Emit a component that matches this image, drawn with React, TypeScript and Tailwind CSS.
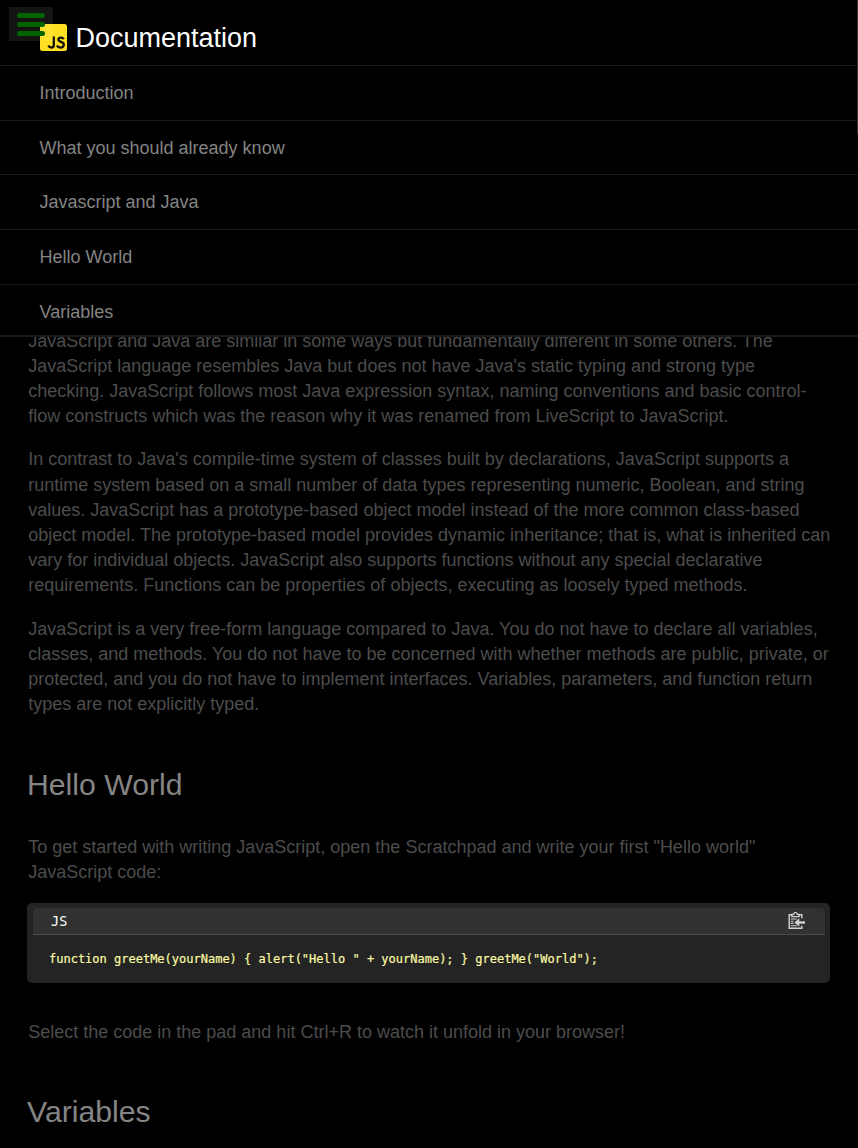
const links = [
  "Introduction",
  "What you should already know",
  "Javascript and Java",
  "Hello World",
  "Variables",
];

const paragraphs = [
  [
    "JavaScript and Java are similar in some ways but fundamentally different in some others. The",
    "JavaScript language resembles Java but does not have Java's static typing and strong type",
    "checking. JavaScript follows most Java expression syntax, naming conventions and basic control-",
    "flow constructs which was the reason why it was renamed from LiveScript to JavaScript.",
  ],
  [
    "In contrast to Java's compile-time system of classes built by declarations, JavaScript supports a",
    "runtime system based on a small number of data types representing numeric, Boolean, and string",
    "values. JavaScript has a prototype-based object model instead of the more common class-based",
    "object model. The prototype-based model provides dynamic inheritance; that is, what is inherited can",
    "vary for individual objects. JavaScript also supports functions without any special declarative",
    "requirements. Functions can be properties of objects, executing as loosely typed methods.",
  ],
  [
    "JavaScript is a very free-form language compared to Java. You do not have to declare all variables,",
    "classes, and methods. You do not have to be concerned with whether methods are public, private, or",
    "protected, and you do not have to implement interfaces. Variables, parameters, and function return",
    "types are not explicitly typed.",
  ],
];

function Paragraph({ lines }: { lines: string[] }) {
  return (
    <p className="mb-[18px] pl-[1.2px] text-[18px] leading-[25.2px] whitespace-nowrap text-[#4c4c4c]">
      {lines.map((line) => (
        <span key={line} className="block">
          {line}
        </span>
      ))}
    </p>
  );
}

function MenuButton() {
  return (
    <button className="absolute top-[7px] left-[9px] flex h-[34px] w-11 flex-col gap-[4.5px] bg-[#ffffe6]/[0.08] pt-[6.3px] pl-2">
      <span className="h-[4.5px] w-7 rounded-full bg-[#006400]" />
      <span className="h-[4.5px] w-7 rounded-full bg-[#006400]" />
      <span className="h-[4.5px] w-7 rounded-full bg-[#006400]" />
    </button>
  );
}

function JsLogo() {
  return (
    <svg viewBox="0 0 27 27" className="h-[27px] w-[27px]">
      <rect width="27" height="27" rx="2.5" fill="#ffdf22" />
      <g fill="none" stroke="#111" strokeWidth="2.3">
        <path d="M13.8 12.6v8.4c0 1.8-.8 2.6-2.3 2.6-1.5 0-2.5-.7-3.2-1.9" />
        <path d="M23.8 15.2c-.7-1.1-1.6-1.6-2.8-1.6-1.6 0-2.6.8-2.6 2 0 2.9 5.4 1.8 5.4 5 0 1.9-1.3 3-3.3 3-1.7 0-3-.8-3.7-2.1" />
      </g>
    </svg>
  );
}

function CopyIcon() {
  return (
    <svg viewBox="0 0 18 19" className="-mt-px h-[19px] w-[18px]" fill="none" stroke="#d0d3d2">
      <path d="M4 3.7H1.2v13.6h12.6v-2.6M11 3.7h2.8v3.6" strokeWidth="1.4" />
      <path d="M3.9 5.6V3.4h1.8c.3-2.6 3.3-2.6 3.6 0h1.8v2.2z" strokeWidth="1.3" />
      <path d="M2.8 8h6M2.8 10.2h2.7M2.8 12.4h2.7M2.8 14.8h6" strokeWidth="1.1" />
      <path d="M17 11.5H9" strokeWidth="2.4" />
      <path d="M6.3 11.5l5-4.2v8.4z" fill="#d0d3d2" stroke="none" />
    </svg>
  );
}

export default function App() {
  return (
    <div className="flex h-[1148px] w-full flex-col overflow-hidden bg-black font-['Liberation_Sans',Arial,sans-serif]">
      <nav className="relative z-10 h-[337px] shrink-0 overflow-hidden border-b-2 border-[#191919] bg-black">
        <header className="flex h-[65px] items-center gap-[8.5px] pt-[10px] pl-10">
          <JsLogo />
          <h1 className="text-[27px] leading-[30px] text-white">Documentation</h1>
        </header>
        <ul>
          {links.map((link) => (
            <li
              key={link}
              className="flex h-[54.7px] items-center border-t border-[#1b1b1b] pt-px pl-[39.5px] text-[18px] text-[#848484]"
            >
              <a>{link}</a>
            </li>
          ))}
        </ul>
        <MenuButton />
        <div className="absolute top-0 right-0 h-[134px] w-px bg-[#333]" />
      </nav>
      <main className="-mt-[8.4px] pl-[27px]">
        {paragraphs.map((lines) => (
          <Paragraph key={lines[0]} lines={lines} />
        ))}
        <h2 className="mt-[46.6px] text-[30.2px] leading-[42px] text-[#858585]">Hello World</h2>
        <div className="mt-[29px]">
          <Paragraph
            lines={[
              'To get started with writing JavaScript, open the Scratchpad and write your first "Hello world"',
              "JavaScript code:",
            ]}
          />
        </div>
        <section className="-mt-[0.6px] h-20 w-[803px] rounded-[5px] bg-[#242424] pt-[5px] pr-[5px] pl-[6px] font-['DejaVu_Sans_Mono',monospace]">
          <div className="flex h-[27px] items-center justify-between rounded-t-[5px] border-b border-[#4b4b4b] bg-[#313131] pr-[19px] pl-[18px]">
            <span className="text-[13.5px] text-white">JS</span>
            <CopyIcon />
          </div>
          <pre className="mt-4 pl-[16px] text-[12px] leading-[16px] text-[#fafaa5] [-webkit-text-stroke:0.2px_#fafaa5] font-['DejaVu_Sans_Mono',monospace]">
            {'function greetMe(yourName) { alert("Hello " + yourName); } greetMe("World");'}
          </pre>
        </section>
        <div className="mt-[36.8px]">
          <Paragraph lines={["Select the code in the pad and hit Ctrl+R to watch it unfold in your browser!"]} />
        </div>
        <h2 className="mt-[46px] text-[30.2px] leading-[42px] text-[#858585]">Variables</h2>
      </main>
    </div>
  );
}
